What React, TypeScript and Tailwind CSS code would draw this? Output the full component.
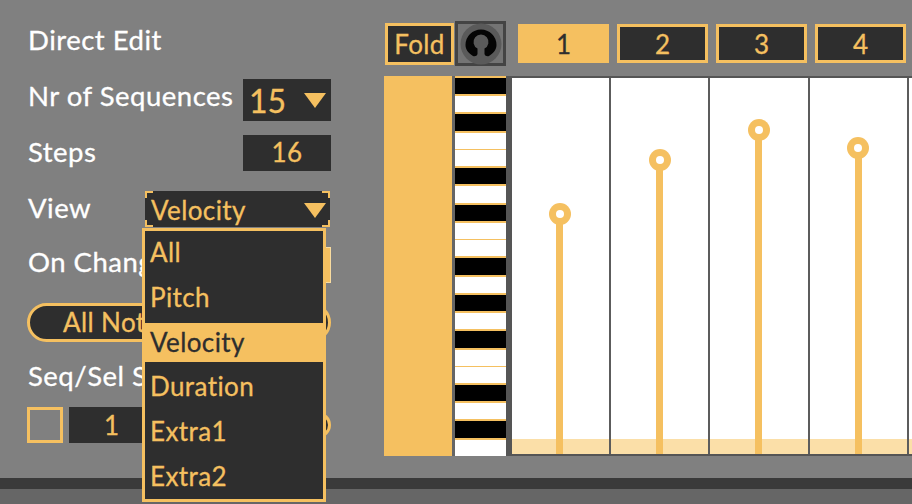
const amber = "#f5c060";

const keys = "bwbwwbwbwwbwbwbwwbwbw".split("");
const pins = [
  { label: "1", top: 125, active: true },
  { label: "2", top: 71 },
  { label: "3", top: 41 },
  { label: "4", top: 59 },
];
const menuItems = ["All", "Pitch", "Velocity", "Duration", "Extra1", "Extra2"];

function Triangle({ w = 22, h = 15 }: { w?: number; h?: number }) {
  return (
    <svg width={w} height={h} viewBox="0 0 22 15">
      <path d="M0 0H22L11 15Z" fill={amber} />
    </svg>
  );
}

function Headphones() {
  return (
    <svg width="42" height="42" viewBox="0 0 42 42" className="shrink-0">
      <circle cx="21" cy="21" r="20.5" fill="#5a5a5a" />
      <path
        d="M13 33C8 30 5.5 26 5.5 22A15.5 15.5 0 0 1 36.5 22C36.5 26 34 30 29 33C27 33.5 25 33 24.5 31L24.5 25.6A7.5 7.5 0 1 0 17.5 25.6L17.5 31C17 33 15 33.5 13 33Z"
        fill="#050505"
      />
    </svg>
  );
}

function Label({ children }: { children: React.ReactNode }) {
  return <div className="text-[27.5px] leading-none tracking-[0.5px] text-white whitespace-nowrap">{children}</div>;
}

function ViewSelect() {
  return (
    <div className="relative mr-px flex h-[36px] w-[185px] items-center justify-between bg-[#2e2e2e] pl-[6px] pr-[4px] pt-[2px] text-[26px] tracking-[0.4px] text-[#f5c060]">
      <span className="absolute left-0 top-0 h-[7px] w-[8px] border-l-2 border-t-2 border-[#f5c060]" />
      <span className="absolute right-0 top-0 h-[7px] w-[8px] border-r-2 border-t-2 border-[#f5c060]" />
      <span className="absolute bottom-0 left-0 h-[7px] w-[8px] border-b-2 border-l-2 border-[#f5c060]" />
      <span className="absolute bottom-0 right-0 h-[7px] w-[8px] border-b-2 border-r-2 border-[#f5c060]" />
      <span>Velocity</span>
      <Triangle />
    </div>
  );
}

function Menu() {
  return (
    <div className="absolute left-[142px] top-[228px] z-10 flex h-[274px] w-[184px] flex-col border-[3px] border-[#f5c060] bg-[#2e2e2e] text-[26px] leading-none tracking-[0.4px] text-[#f5c060]">
      {menuItems.map((item) => (
        <div
          key={item}
          className={
            item === "Velocity"
              ? "my-[2.9px] flex h-[39px] items-center bg-[#f5c060] pb-[2px] pl-[5px] text-[#2e2e2e]"
              : "flex h-[44.8px] items-center pb-[2px] pl-[5px]"
          }
        >
          {item}
        </div>
      ))}
    </div>
  );
}

function LeftPanel() {
  return (
    <div className="relative flex w-[384px] shrink-0 flex-col pl-[27px] pr-[53px]">
      <div className="flex h-[79px] items-center pl-px">
        <Label>Direct Edit</Label>
      </div>
      <div className="flex h-[42px] items-center justify-between">
        <div className="pb-[8px] pl-px">
          <Label>Nr of Sequences</Label>
        </div>
        <div className="flex h-[42px] w-[88px] shrink-0 items-center justify-between bg-[#2e2e2e] pl-[6px] pr-[5px] pt-px text-[32px] text-[#f5c060]">
          <span>15</span>
          <Triangle />
        </div>
      </div>
      <div className="mt-[14px] flex h-[36px] items-center justify-between">
        <div className="pb-[2px] pl-px">
          <Label>Steps</Label>
        </div>
        <div className="flex h-[36px] w-[88px] items-center justify-center bg-[#2e2e2e] pb-[2px] text-[26px] tracking-[0.5px] text-[#f5c060]">
          16
        </div>
      </div>
      <div className="mt-[20px] flex h-[36px] items-center justify-between">
        <div className="pb-[2px] pl-px">
          <Label>View</Label>
        </div>
        <ViewSelect />
      </div>
      <div className="mt-[20px] flex h-[36px] items-center justify-between">
        <div className="pb-[6px] pl-px">
          <Label>On Change</Label>
        </div>
        <div className="h-[36px] w-[60px] border border-[#f9dca0] bg-[#f5c060]" />
      </div>
      <div className="mt-[20px] flex h-[39px] items-center rounded-full border-[3px] border-[#f5c060] bg-[#2e2e2e] pl-[33px] text-[26px] tracking-[0.4px] text-[#f5c060]">
        All Notes
      </div>
      <div className="mt-[21px] flex h-[26px] items-center pl-px">
        <Label>Seq/Sel Step</Label>
      </div>
      <div className="mt-[18px] flex h-[36px] items-center">
        <div className="h-[36px] w-[36px] shrink-0 border-[3px] border-[#f5c060]" />
        <div className="ml-[6px] flex h-[36px] w-[85px] shrink-0 items-center justify-center bg-[#2e2e2e] text-[26px] text-[#f5c060]">
          1
        </div>
        <div className="ml-auto h-[26px] w-[60px] rounded-full border-[3px] border-[#f5c060] bg-[#2e2e2e]" />
      </div>
      <Menu />
    </div>
  );
}

function TopBar() {
  return (
    <div className="flex h-[76px] pl-px pt-[21px]">
      <div className="mt-[2px] flex h-[42px] w-[69px] items-center justify-center border-[3px] border-[#f5c060] bg-[#2e2e2e] text-[26px] tracking-[0.4px] text-[#f5c060]">
        Fold
      </div>
      <div className="ml-px flex h-[45px] w-[51px] items-center justify-center border-[3px] border-[#444444] bg-[#747474]">
        <Headphones />
      </div>
      <div className="ml-[12px] mt-[3px] flex gap-[8px]">
        {pins.map((p) => (
          <div
            key={p.label}
            className={
              p.active
                ? "flex h-[39px] w-[91px] items-center justify-center bg-[#f5c060] pt-[2px] text-[26px] text-[#2e2e2e]"
                : "flex h-[39px] w-[91px] items-center justify-center border-[3px] border-[#f5c060] bg-[#2e2e2e] pt-[2px] text-[26px] text-[#f5c060]"
            }
          >
            {p.label}
          </div>
        ))}
      </div>
    </div>
  );
}

function Keyboard() {
  return (
    <div className="flex w-[54px] flex-col border-l-[3px] border-[#666666]">
      {keys.map((k, i) => {
        if (k === "b") return <div key={i} className="flex-1 border-t-2 border-[#f5c060] bg-black" />;
        // a white key under a black one gets the heavier line
        return keys[i - 1] === "b" ? (
          <div key={i} className="flex-1 border-t-2 border-[#f5c060] bg-white" />
        ) : (
          <div key={i} className="flex-1 border-t border-[#f5c060] bg-white" />
        );
      })}
    </div>
  );
}

function Roll() {
  return (
    <div className="relative flex min-w-0 flex-1 overflow-hidden border-y-2 border-l-[6px] border-[#555555] bg-white">
      {pins.map((p) => (
        <div
          key={p.label}
          className="relative z-10 flex w-[99.33px] shrink-0 flex-col items-center border-r-2 border-[#5c5c5c] first:-ml-[0.4px] first:pr-[1px]"
          style={{ paddingTop: p.top }}
        >
          <div className="flex h-[22px] w-[22px] shrink-0 items-center justify-center rounded-full bg-[#f5c060]">
            <div className="h-[8px] w-[8px] rounded-full bg-white" />
          </div>
          <div className="-mt-px w-[7px] flex-1 bg-[#f5c060]" />
        </div>
      ))}
      <div className="absolute inset-x-0 bottom-0 h-[15px] bg-[#fbdfa8]" />
    </div>
  );
}

export default function App() {
  return (
    <div
      className="flex h-[504px] w-[912px] flex-col overflow-hidden bg-[#808080] [-webkit-text-stroke:0.3px]"
      style={{ fontFamily: "Lato, 'Noto Sans', sans-serif" }}
    >
      <div className="flex h-[478px] shrink-0">
        <LeftPanel />
        <div className="flex min-w-0 flex-1 flex-col">
          <TopBar />
          <div className="flex h-[380px]">
            <div className="w-[68px] shrink-0 bg-[#f5c060]" />
            <Keyboard />
            <Roll />
          </div>
        </div>
      </div>
      <div className="h-[11px] shrink-0 bg-[#3a3a3a]" />
      <div className="flex-1 bg-[#666666]" />
    </div>
  );
}
